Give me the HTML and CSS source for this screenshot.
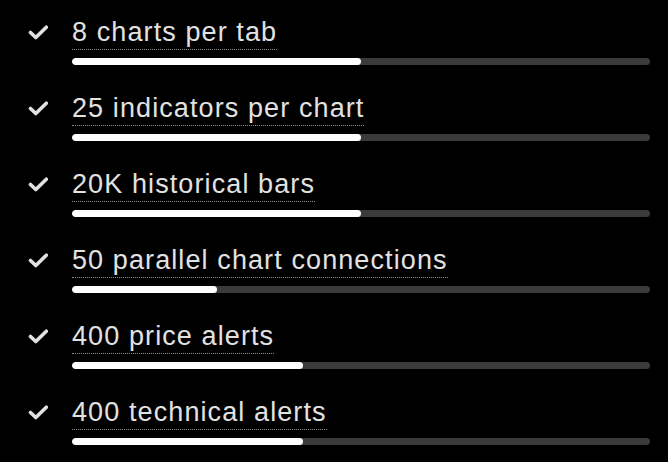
FILE: index.html
```html
<!DOCTYPE html>
<html>
<head>
<meta charset="utf-8">
<link rel="stylesheet" href="styles.css">
</head>
<body>
<ul class="list">
  <li class="item">
    <svg class="check" viewBox="0 0 20 15"><path d="M2.5 7.5 L7.8 12.5 L18.3 2.2" /></svg>
    <div class="body">
      <span class="label">8 charts per tab</span>
      <div class="track"><div class="fill" style="width:50%"></div></div>
    </div>
  </li>
  <li class="item">
    <svg class="check" viewBox="0 0 20 15"><path d="M2.5 7.5 L7.8 12.5 L18.3 2.2" /></svg>
    <div class="body">
      <span class="label">25 indicators per chart</span>
      <div class="track"><div class="fill" style="width:50%"></div></div>
    </div>
  </li>
  <li class="item">
    <svg class="check" viewBox="0 0 20 15"><path d="M2.5 7.5 L7.8 12.5 L18.3 2.2" /></svg>
    <div class="body">
      <span class="label">20K historical bars</span>
      <div class="track"><div class="fill" style="width:50%"></div></div>
    </div>
  </li>
  <li class="item">
    <svg class="check" viewBox="0 0 20 15"><path d="M2.5 7.5 L7.8 12.5 L18.3 2.2" /></svg>
    <div class="body">
      <span class="label">50 parallel chart connections</span>
      <div class="track"><div class="fill" style="width:25%"></div></div>
    </div>
  </li>
  <li class="item">
    <svg class="check" viewBox="0 0 20 15"><path d="M2.5 7.5 L7.8 12.5 L18.3 2.2" /></svg>
    <div class="body">
      <span class="label">400 price alerts</span>
      <div class="track"><div class="fill" style="width:40%"></div></div>
    </div>
  </li>
  <li class="item">
    <svg class="check" viewBox="0 0 20 15"><path d="M2.5 7.5 L7.8 12.5 L18.3 2.2" /></svg>
    <div class="body">
      <span class="label">400 technical alerts</span>
      <div class="track"><div class="fill" style="width:40%"></div></div>
    </div>
  </li>
</ul>
</body>
</html>
```
FILE: styles.css
```css
html, body {
  margin: 0;
  padding: 0;
  background: #000;
}
body {
  width: 668px;
  height: 462px;
  overflow: hidden;
  font-family: "Liberation Sans", Arial, sans-serif;
  color: #e2e2e2;
}
.list {
  list-style: none;
  margin: 0;
  padding: 16px 18px 0 28px;
  display: flex;
  flex-direction: column;
}
.item {
  display: flex;
  align-items: flex-start;
  gap: 24px;
  height: 76px;
}
.check {
  width: 20px;
  height: 15px;
  margin-top: 9px;
  flex: none;
  fill: none;
  stroke: #e2e2e2;
  stroke-width: 3.6;
  stroke-linecap: round;
  stroke-linejoin: round;
}
.body {
  flex: 1;
  display: flex;
  flex-direction: column;
  align-items: flex-start;
}
.label {
  font-size: 27px;
  line-height: 33px;
  letter-spacing: 1.1px;
  border-bottom: 1px dotted #8c8c8c;
}
.track {
  margin-top: 8px;
  align-self: stretch;
  height: 7px;
  border-radius: 4px;
  background: #3a3a3a;
  overflow: hidden;
}
.fill {
  height: 100%;
  background: #fff;
  border-radius: 4px;
}
```
